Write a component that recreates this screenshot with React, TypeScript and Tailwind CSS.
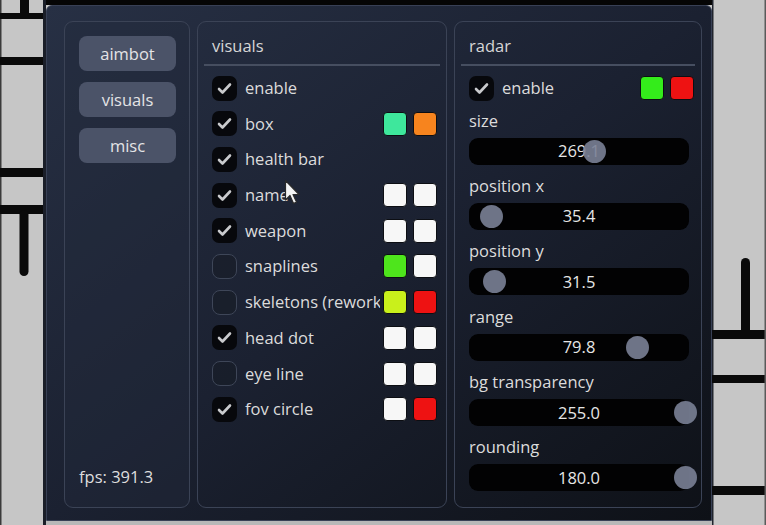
import React from "react";

type Row = {
  label: string;
  checked: boolean;
  colors?: [string, string];
  clip?: boolean;
};

const visualRows: Row[] = [
  { label: "enable", checked: true },
  { label: "box", checked: true, colors: ["#3ee79c", "#f7841e"] },
  { label: "health bar", checked: true },
  { label: "name", checked: true, colors: ["#f7f7f7", "#f7f7f7"] },
  { label: "weapon", checked: true, colors: ["#f7f7f7", "#f7f7f7"] },
  { label: "snaplines", checked: false, colors: ["#4ee51c", "#f7f7f7"] },
  { label: "skeletons (reworked)", checked: false, colors: ["#c9f01b", "#ee1212"], clip: true },
  { label: "head dot", checked: true, colors: ["#f7f7f7", "#f7f7f7"] },
  { label: "eye line", checked: false, colors: ["#f7f7f7", "#f7f7f7"] },
  { label: "fov circle", checked: true, colors: ["#f7f7f7", "#ee1212"] },
];

type SliderRow = { label: string; value: string; grab: number };

const radarSliders: SliderRow[] = [
  { label: "size", value: "269.1", grab: 125 },
  { label: "position x", value: "35.4", grab: 22 },
  { label: "position y", value: "31.5", grab: 25 },
  { label: "range", value: "79.8", grab: 168 },
  { label: "bg transparency", value: "255.0", grab: 216 },
  { label: "rounding", value: "180.0", grab: 216 },
];

function Checkbox({ checked }: { checked: boolean }) {
  if (!checked) {
    return (
      <span className="block h-[25px] w-[25px] shrink-0 rounded-[8px] border-[1.5px] border-[#3e4658] bg-[#181c27]/60" />
    );
  }
  return (
    <span className="flex h-[25px] w-[25px] shrink-0 items-center justify-center rounded-[7px] bg-[#07080c]">
      <svg width="25" height="25" viewBox="0 0 25 25">
        <polyline
          points="7,13 10.5,16.5 18,8.5"
          fill="none"
          stroke="#c9cacd"
          strokeWidth="2.6"
          strokeLinecap="round"
          strokeLinejoin="round"
        />
      </svg>
    </span>
  );
}

function Swatch({ color }: { color: string }) {
  return (
    <span
      className="block h-[24px] w-[24px] shrink-0 rounded-[4px] border border-[#0c0e13]"
      style={{ backgroundColor: color }}
    />
  );
}

function Slider({ value, grab }: { value: string; grab: number }) {
  return (
    <div className="relative flex h-[27px] w-[220px] items-center justify-center rounded-[9px] bg-[#020203]">
      <span className="relative z-0 text-[#e6e6e6]">{value}</span>
      <span
        className="absolute top-[2px] h-[23px] w-[23px] rounded-full bg-[#7a8196] opacity-90"
        style={{ left: grab - 11.5 }}
      />
    </div>
  );
}

function LeftStrip() {
  return (
    <svg width="46" height="525" viewBox="0 0 46 525" className="block shrink-0">
      <rect width="46" height="525" fill="#c6c6c6" />
      <rect x="0" y="0" width="1.5" height="525" fill="#3a3a3a" />
      <g fill="#0a0a0a">
        <rect x="20" y="0" width="9" height="16" />
        <rect x="0" y="13" width="46" height="6" />
        <rect x="0" y="57" width="46" height="8" />
        <rect x="0" y="168" width="46" height="9" />
        <rect x="0" y="205" width="46" height="9" />
        <rect x="19.5" y="210" width="9" height="66" rx="4.5" />
      </g>
      <rect x="43" y="0" width="3" height="525" fill="#1a1e28" />
    </svg>
  );
}

function RightStrip() {
  return (
    <svg width="54" height="525" viewBox="0 0 54 525" className="block shrink-0">
      <rect width="54" height="525" fill="#c6c6c6" />
      <rect x="0" y="0" width="1.5" height="525" fill="#20242d" />
      <g fill="#0a0a0a">
        <rect x="29" y="258" width="9" height="80" rx="4.5" />
        <rect x="0" y="330" width="54" height="9" />
        <rect x="0" y="375" width="54" height="8" />
        <rect x="0" y="486" width="54" height="9" />
      </g>
      <rect x="52.5" y="0" width="1.5" height="525" fill="#5a5a5a" />
    </svg>
  );
}

function Cursor() {
  return (
    <svg
      width="20"
      height="28"
      viewBox="0 0 20 28"
      className="pointer-events-none absolute left-[284px] top-[179px]"
    >
      <path
        d="M1.5 1.5 L1.5 21 L6 16.5 L9.5 24.5 L12.5 23 L9 15.5 L15 15.5 Z"
        fill="#f4f4f4"
        stroke="#2a2a2a"
        strokeWidth="1.2"
        strokeLinejoin="round"
      />
    </svg>
  );
}

export default function App() {
  return (
    <div
      className="relative flex h-[525px] w-[766px] overflow-hidden bg-[#c6c6c6] text-[16.5px] font-medium leading-[20px] text-[#dcdcdc]"
      style={{ fontFamily: '"Open Sans", "Noto Sans", sans-serif' }}
    >
      <LeftStrip />

      <div className="flex w-[666px] shrink-0 flex-col">
        <div className="h-[5px] bg-[#050505]" />
        <div className="flex h-[516px] gap-[7px] rounded-t-[6px] border border-[#384055] bg-gradient-to-br from-[#273044] via-[#1b2131] to-[#0e1117] pb-[12px] pl-[17px] pr-[9px] pt-[15px]">
          {/* tabs */}
          <div className="flex w-[126px] flex-col rounded-[9px] border-[1.5px] border-[#3b4356] bg-[#222a3b]/40 px-[14px] pb-[20px] pt-[14px]">
            <div className="flex flex-col gap-[11px]">
              {["aimbot", "visuals", "misc"].map((t) => (
                <div
                  key={t}
                  className="flex h-[35px] w-[97px] items-center justify-center rounded-[8px] bg-[#4b5368] text-[#e4e4e6]"
                >
                  {t}
                </div>
              ))}
            </div>
            <div className="mt-auto text-[#dedede]">fps: 391.3</div>
          </div>

          {/* visuals */}
          <div className="flex w-[250px] flex-col rounded-[9px] border-[1.5px] border-[#3b4356] px-[6px] pt-[14px]">
            <div className="px-[8px] text-[#d6d6d6]">visuals</div>
            <div className="mt-[8px] h-[1.5px] bg-[#464e60]" />
            <div className="mt-[10px] flex flex-col gap-[10.7px] pl-[8px] pr-[3px]">
              {visualRows.map((r) => (
                <div key={r.label} className="flex h-[25px] items-center">
                  <Checkbox checked={r.checked} />
                  {r.clip ? (
                    <span className="ml-[8px] w-[135px] shrink-0 overflow-hidden whitespace-nowrap">
                      {r.label}
                    </span>
                  ) : (
                    <span className="ml-[8px] whitespace-nowrap">{r.label}</span>
                  )}
                  {r.colors ? (
                    <div className="ml-auto flex shrink-0 gap-[6px]">
                      <Swatch color={r.colors[0]} />
                      <Swatch color={r.colors[1]} />
                    </div>
                  ) : null}
                </div>
              ))}
            </div>
          </div>

          {/* radar */}
          <div className="flex w-[248px] flex-col rounded-[9px] border-[1.5px] border-[#3b4356] px-[6px] pt-[14px]">
            <div className="px-[8px] text-[#d6d6d6]">radar</div>
            <div className="mt-[8px] h-[1.5px] bg-[#464e60]" />
            <div className="mt-[10px] flex flex-col pl-[8px] pr-[1px]">
              <div className="flex h-[25px] items-center">
                <Checkbox checked />
                <span className="ml-[8px]">enable</span>
                <div className="ml-auto flex gap-[6px]">
                  <Swatch color="#34ec1b" />
                  <Swatch color="#ee1212" />
                </div>
              </div>
              <div className="mt-[10px] flex flex-col gap-[11.4px]">
                {radarSliders.map((s) => (
                  <div key={s.label} className="flex flex-col gap-[7px]">
                    <div className="h-[20px]">{s.label}</div>
                    <Slider value={s.value} grab={s.grab} />
                  </div>
                ))}
              </div>
            </div>
          </div>
        </div>
        <div className="h-[4px] bg-[#b8b8b8]" />
      </div>

      <RightStrip />
      <Cursor />
    </div>
  );
}
